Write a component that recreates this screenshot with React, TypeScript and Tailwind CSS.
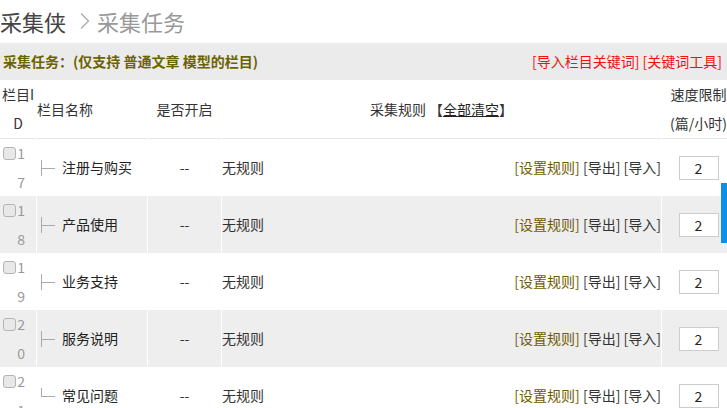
const rows = [
  { id: "17", name: "注册与购买", last: false },
  { id: "18", name: "产品使用", last: false },
  { id: "19", name: "业务支持", last: false },
  { id: "20", name: "服务说明", last: false },
  { id: "21", name: "常见问题", last: true },
];

const cols = "grid grid-cols-[36px_110px_73px_439px_73px] gap-x-px";

function Checkbox() {
  return (
    <span className="inline-block w-[13px] h-[13px] rounded-[3px] border border-[#b4b4b4] bg-[#e8e8e8] align-[-1px] mr-px" />
  );
}

// tree connector drawn with borders: ├─ or └─
function Branch({ last }: { last: boolean }) {
  return (
    <span className="relative inline-block w-[14px] h-[16px] mr-[7px]">
      <span
        className={`absolute left-0 top-0 w-px bg-[#aaaaaa] ${last ? "h-[9px]" : "h-[16px]"}`}
      />
      <span className="absolute left-0 top-[8px] w-[14px] h-px bg-[#aaaaaa]" />
    </span>
  );
}

export default function App() {
  return (
    <div
      className="relative w-[727px] h-[408px] overflow-hidden bg-white text-[14px] text-[#333]"
      style={{ fontFamily: '"Noto Sans CJK SC", "Noto Sans", sans-serif' }}
    >
      {/* breadcrumb */}
      <div className="flex items-center h-[43px] pb-[1px] text-[22px] leading-none">
        <span className="text-[#444]">采集侠</span>
        <svg width="10" height="16" viewBox="0 0 10 16" className="ml-[14px] mr-[7px]">
          <path d="M1 0.5 L8.5 8 L1 15.5" fill="none" stroke="#aaa" strokeWidth="1.3" />
        </svg>
        <span className="text-[#999]">采集任务</span>
      </div>

      {/* toolbar */}
      <div className="flex items-center justify-between h-[37px] bg-[#ebebeb] pl-[3px] pr-[5px] text-[14px]">
        <span className="font-bold text-[#6b6300]">采集任务：(仅支持 普通文章 模型的栏目)</span>
        <span className="text-[#f01010]">[导入栏目关键词] [关键词工具]</span>
      </div>

      {/* table */}
      <div className="w-[735px]">
        <div className={`${cols} leading-[29px]`}>
          <div className="h-[59px] border-b border-[#e6e6e6] text-center break-all">栏目ID</div>
          <div className="h-[59px] border-b border-[#e6e6e6] flex items-center">栏目名称</div>
          <div className="h-[59px] border-b border-[#e6e6e6] flex items-center justify-center">是否开启</div>
          <div className="h-[59px] border-b border-[#e6e6e6] flex items-center justify-center">
            采集规则 【<span className="underline text-[#222]">全部清空</span>】
          </div>
          <div className="h-[59px] border-b border-[#e6e6e6] text-center">
            速度限制
            <br />
            (篇/小时)
          </div>
        </div>

        {rows.map((r, i) => {
          const bg = i % 2 === 1 ? "bg-[#eeeeee]" : "bg-white";
          return (
            <div key={r.id} className={`${cols} h-[57px] leading-[28.5px]`}>
              <div className={`${bg} text-right pr-[11px] text-[#999]`}>
                <div>
                  <Checkbox />
                  {r.id[0]}
                </div>
                <div>{r.id[1]}</div>
              </div>
              <div className={`${bg} flex items-center pl-[4px]`}>
                <Branch last={r.last} />
                <span className="text-[#222]">{r.name}</span>
              </div>
              <div className={`${bg} flex items-center justify-center`}>--</div>
              <div className={`${bg} flex items-center justify-between`}>
                <span>无规则</span>
                <span>
                  <span className="text-[#6e5c00]">[设置规则]</span> [导出] [导入]
                </span>
              </div>
              <div className={`${bg} flex items-center justify-center`}>
                <div className="w-[40px] h-[24px] border border-[#cccccc] bg-white flex items-center justify-center text-[#222] leading-none">
                  2
                </div>
              </div>
            </div>
          );
        })}
      </div>

      {/* scroll indicator */}
      <div className="absolute right-0 top-[183px] w-[6px] h-[60px] bg-[#0f8ee3]" />
    </div>
  );
}
